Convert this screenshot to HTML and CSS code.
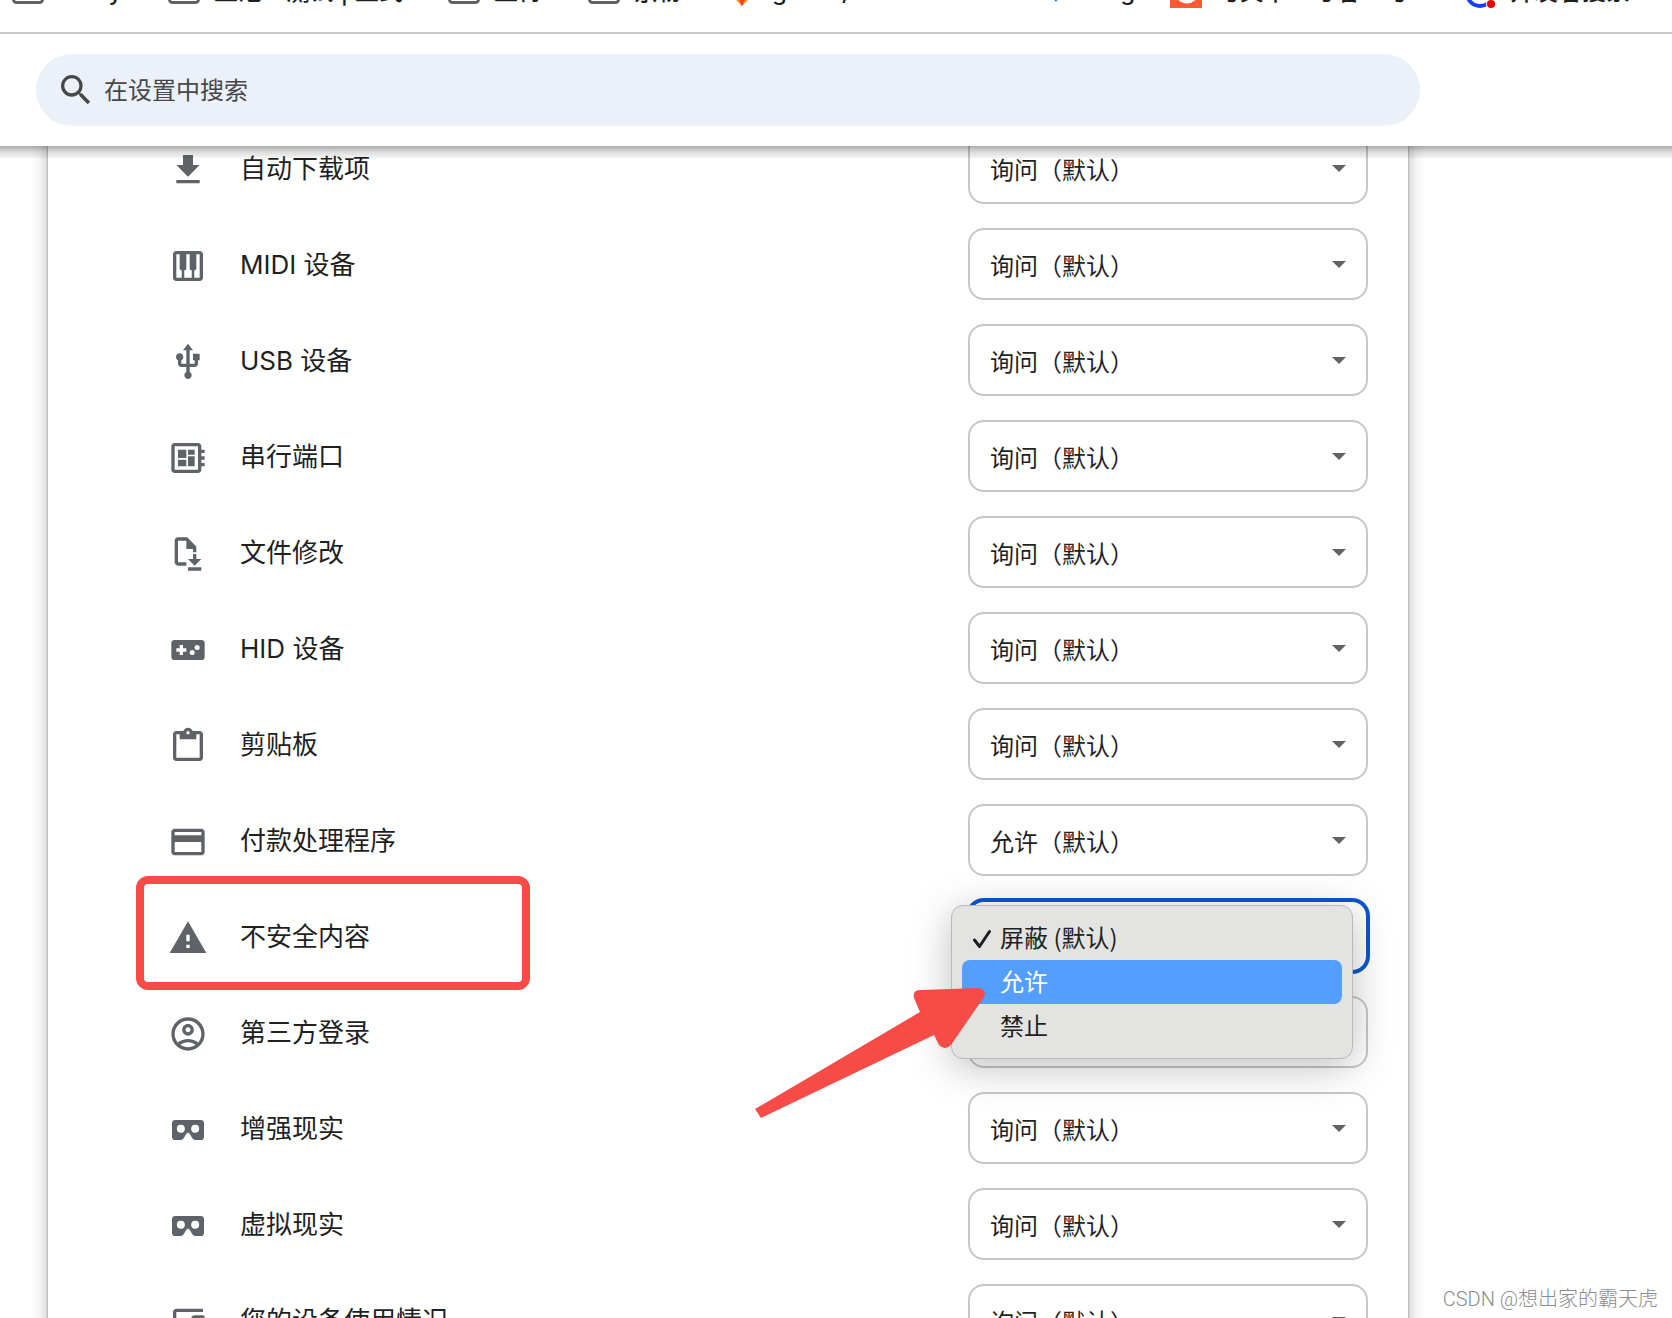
FILE: index.html
```html
<!DOCTYPE html>
<html lang="zh-CN">
<head>
<meta charset="utf-8">
<title>设置 - 网站设置</title>
<link rel="stylesheet" href="styles.css">
</head>
<body>
<nav class="bookmarks" aria-label="书签栏">
  <a href="#"><svg class="bm-icon" viewBox="0 0 32 32"><rect class="folder" x="1.500" y="4" width="29" height="22.500" rx="3"/></svg>study</a>
  <a href="#"><svg class="bm-icon" viewBox="0 0 32 32"><rect class="folder" x="1.500" y="4" width="29" height="22.500" rx="3"/></svg>正池 - 测试 | 正式</a>
  <a href="#"><svg class="bm-icon" viewBox="0 0 32 32"><rect class="folder" x="1.500" y="4" width="29" height="22.500" rx="3"/></svg>正待</a>
  <a href="#"><svg class="bm-icon" viewBox="0 0 32 32"><rect class="folder" x="1.500" y="4" width="29" height="22.500" rx="3"/></svg>京粉</a>
  <a href="#"><svg class="bm-icon" viewBox="0 0 32 32"><path fill="#fc9d26" d="M2 16h28L16 30z"/><path fill="#fc6d26" d="M7 16h18l-9 14z"/><path fill="#e24329" d="M11 16h10l-5 14z"/></svg>gitlab / webserver…</a>
  <a href="#"><svg class="bm-icon" viewBox="0 0 32 32"><path fill="#1a73d8" d="M7 12h20L18 26z"/></svg>Bing</a>
  <a href="#"><svg class="bm-icon" viewBox="0 0 32 32"><path fill="#ff5a36" d="M0 0h32v32H0z"/><path fill="none" stroke="#fff" stroke-width="5" d="M23 9c-6-5-15-1-15 7s9 12 16 6"/></svg>与其卡 - 号者 - 与…</a>
  <a href="#"><svg class="bm-icon" viewBox="0 0 32 32"><circle cx="16" cy="17" r="13" fill="none" stroke="#1440ff" stroke-width="4"/><circle cx="27" cy="28" r="5" fill="#fff"/><circle cx="27" cy="28" r="4" fill="#e60000"/></svg>开发者搜索</a>
</nav>

<header class="toolbar">
  <label class="search">
    <svg viewBox="0 0 24 24" aria-hidden="true"><path d="M15.500 14h-.79l-.28-.27A6.471 6.471 0 0 0 16 9.500 6.500 6.500 0 1 0 9.500 16c1.610 0 3.090-.59 4.230-1.570l.27.28v.79l5 4.990L20.490 19l-4.990-5zm-6 0C7.010 14 5 11.990 5 9.500S7.010 5 9.500 5 14 7.010 14 9.500 11.990 14 9.500 14z"/></svg>
    <input type="text" placeholder="在设置中搜索" aria-label="在设置中搜索">
  </label>
</header>

<main class="content">
  <section class="card">
    <div class="row">
      <svg class="icon" viewBox="0 0 24 24"><path d="M19 9h-4V3H9v6H5l7 7 7-7zM5 18v2h14v-2z"/></svg>
      <label for="s1">自动下载项</label>
      <span class="select"><select id="s1"><option>询问（默认）</option></select></span>
    </div>
    <div class="row">
      <svg class="icon" viewBox="0 0 24 24"><path d="M19 3H5c-1.100 0-2 .9-2 2v14c0 1.100.9 2 2 2h14c1.100 0 2-.9 2-2V5c0-1.100-.9-2-2-2zM14 14.500h.25V19h-4.500v-4.500H10c.55 0 1-.45 1-1V5h2v8.500c0 .55.45 1 1 1zM5 5h2v8.500c0 .55.45 1 1 1h.25V19H5V5zm14 14h-3.250v-4.500H16c.55 0 1-.45 1-1V5h2v14z"/></svg>
      <label for="s2">MIDI 设备</label>
      <span class="select"><select id="s2"><option>询问（默认）</option></select></span>
    </div>
    <div class="row">
      <svg class="icon" viewBox="0 0 24 24"><path d="M15 7v4h1v2h-3V5h2l-3-4-3 4h2v8H8v-2.070c.7-.37 1.200-1.080 1.200-1.930 0-1.210-.99-2.200-2.200-2.200-1.210 0-2.200.99-2.200 2.200 0 .85.5 1.560 1.200 1.930V13c0 1.110.89 2 2 2h3v3.050c-.71.37-1.200 1.100-1.200 1.950 0 1.220.99 2.200 2.200 2.200 1.210 0 2.200-.98 2.200-2.200 0-.85-.49-1.580-1.200-1.950V15h3c1.110 0 2-.89 2-2v-2h1V7h-4z"/></svg>
      <label for="s3">USB 设备</label>
      <span class="select"><select id="s3"><option>询问（默认）</option></select></span>
    </div>
    <div class="row">
      <svg class="icon" viewBox="0 0 24 24"><path fill-rule="evenodd" d="M22 9V7h-2V5c0-1.100-.9-2-2-2H4c-1.100 0-2 .9-2 2v14c0 1.100.9 2 2 2h14c1.100 0 2-.9 2-2v-2h2v-2h-2v-2h2v-2h-2V9h2zm-4 10H4V5h14v14z"/><path d="M6 13h5v4H6zM12 7h4v3h-4zM6 7h5v5H6zM12 11h4v6h-4z"/></svg>
      <label for="s4">串行端口</label>
      <span class="select"><select id="s4"><option>询问（默认）</option></select></span>
    </div>
    <div class="row">
      <svg class="icon" viewBox="0 0 24 24"><path d="M6 2c-1.100 0-2 .9-2 2v13c0 1.100.9 2 2 2h5v-2H6V4h5v5h4v2h2V7.500L11.500 2zM15 12v3h-3l4 4 4-4h-3v-3zM12 20v2h8v-2z"/></svg>
      <label for="s5">文件修改</label>
      <span class="select"><select id="s5"><option>询问（默认）</option></select></span>
    </div>
    <div class="row">
      <svg class="icon" viewBox="0 0 24 24"><rect x="2" y="6" width="20" height="12" rx="2"/><path class="hole" d="M7 9h2v2h2v2H9v2H7v-2H5v-2h2z"/><circle class="hole" cx="14.500" cy="13.500" r="1.500"/><circle class="hole" cx="17.500" cy="10.500" r="1.500"/></svg>
      <label for="s6">HID 设备</label>
      <span class="select"><select id="s6"><option>询问（默认）</option></select></span>
    </div>
    <div class="row">
      <svg class="icon" viewBox="0 0 24 24"><path d="M19 3h-4.180C14.400 1.840 13.300 1 12 1s-2.400.84-2.820 2H5c-1.100 0-2 .9-2 2v14c0 1.100.9 2 2 2h14c1.100 0 2-.9 2-2V5c0-1.100-.9-2-2-2zm-7 0c.55 0 1 .45 1 1s-.45 1-1 1-1-.45-1-1 .45-1 1-1zm7 16H5V5h2v3h10V5h2v14z"/></svg>
      <label for="s7">剪贴板</label>
      <span class="select"><select id="s7"><option>询问（默认）</option></select></span>
    </div>
    <div class="row">
      <svg class="icon" viewBox="0 0 24 24"><path d="M20 4H4c-1.110 0-2 .89-2 2v12c0 1.110.89 2 2 2h16c1.110 0 2-.89 2-2V6c0-1.110-.89-2-2-2zm0 14H4v-6h16v6zm0-10H4V6h16v2z"/></svg>
      <label for="s8">付款处理程序</label>
      <span class="select"><select id="s8"><option>允许（默认）</option></select></span>
    </div>
    <div class="row row-open">
      <svg class="icon" viewBox="0 0 24 24"><path d="M1 21h22L12 2 1 21zm12-3h-2v-2h2v2zm0-4h-2v-4h2v4z"/></svg>
      <label for="s9">不安全内容</label>
      <span class="select"><select id="s9" class="focused"><option></option></select></span>
      <div class="highlight"></div>
      <ul class="menu" role="listbox" aria-label="不安全内容">
        <li role="option" aria-selected="true"><svg class="check" viewBox="0 0 20 20"><path d="M2.500 11l5 6.500L17.500 2.500"/></svg>屏蔽 (默认)</li>
        <li role="option" class="active">允许</li>
        <li role="option">禁止</li>
      </ul>
      <svg class="arrow" viewBox="0 0 230 132" aria-hidden="true"><path d="M0 121L165 24L159 10Q157 2 166 2L224 0Q232 2 229 9L196 57Q190 63 184 57L179 47L6 130Z"/></svg>
    </div>
    <div class="row">
      <svg class="icon" viewBox="0 0 24 24"><path d="M12 2C6.480 2 2 6.480 2 12s4.480 10 10 10 10-4.480 10-10S17.520 2 12 2zM7.350 18.500C8.660 17.560 10.260 17 12 17s3.340.56 4.650 1.500c-1.310.94-2.910 1.500-4.650 1.500s-3.340-.56-4.650-1.500zm10.790-1.380C16.450 15.800 14.320 15 12 15s-4.450.8-6.140 2.120C4.700 15.730 4 13.950 4 12c0-4.420 3.580-8 8-8s8 3.580 8 8c0 1.950-.7 3.730-1.860 5.120zM12 6c-1.930 0-3.500 1.570-3.500 3.500S10.070 13 12 13s3.500-1.570 3.500-3.500S13.930 6 12 6zm0 5c-.83 0-1.500-.67-1.500-1.500S11.170 8 12 8s1.500.67 1.500 1.500S12.830 11 12 11z"/></svg>
      <label for="s10">第三方登录</label>
      <span class="select"><select id="s10"><option></option></select></span>
    </div>
    <div class="row">
      <svg class="icon" viewBox="0 0 24 24"><path d="M4.400 6h15.200a2 2 0 0 1 2 2v8a2 2 0 0 1-2 2h-3.300q-1.300 0-1.800-1.200l-1.400-2.400q-1.100-1.400-2.200 0l-1.400 2.400Q9 18 7.700 18H4.400a2 2 0 0 1-2-2V8a2 2 0 0 1 2-2z"/><circle class="hole" cx="7.700" cy="11.300" r="2.400"/><circle class="hole" cx="16.300" cy="11.300" r="2.400"/></svg>
      <label for="s11">增强现实</label>
      <span class="select"><select id="s11"><option>询问（默认）</option></select></span>
    </div>
    <div class="row">
      <svg class="icon" viewBox="0 0 24 24"><path d="M4.400 6h15.200a2 2 0 0 1 2 2v8a2 2 0 0 1-2 2h-3.300q-1.300 0-1.800-1.200l-1.400-2.400q-1.100-1.400-2.200 0l-1.400 2.400Q9 18 7.700 18H4.400a2 2 0 0 1-2-2V8a2 2 0 0 1 2-2z"/><circle class="hole" cx="7.700" cy="11.300" r="2.400"/><circle class="hole" cx="16.300" cy="11.300" r="2.400"/></svg>
      <label for="s12">虚拟现实</label>
      <span class="select"><select id="s12"><option>询问（默认）</option></select></span>
    </div>
    <div class="row">
      <svg class="icon" viewBox="0 0 24 24"><path d="M21 4H5c-1.100 0-2 .9-2 2v14h10v-2H5V6h16zM16 8h5a1 1 0 0 1 1 1v10a1 1 0 0 1-1 1h-5a2 2 0 0 1-2-2v-8a2 2 0 0 1 2-2z"/></svg>
      <label for="s13">您的设备使用情况</label>
      <span class="select"><select id="s13"><option>询问（默认）</option></select></span>
    </div>
  </section>
  <p class="watermark">CSDN @想出家的霸天虎</p>
</main>
</body>
</html>
```
FILE: styles.css
```css
* {
  box-sizing: border-box;
}

body {
  margin: 0;
  height: 100vh;
  display: flex;
  flex-direction: column;
  overflow: hidden;
  background: #fff;
  color: #1f1f1f;
  font-family: Inter, "Noto Sans CJK SC", sans-serif;
}

/* Bookmark bar, scrolled partly out of view */
.bookmarks {
  flex: none;
  display: grid;
  grid-template-columns: 156px 280px 140px 138px 312px 132px 294px 1fr;
  height: 34px;
  padding-left: 12px;
  border-bottom: 2px solid #c9c9cb;
  overflow: hidden;
}

.bookmarks a {
  display: flex;
  align-items: flex-start;
  gap: 14px;
  height: 36px;
  margin-top: -24px;
  color: #1f1f1f;
  font-size: 24px;
  font-weight: 500;
  line-height: 32px;
  text-decoration: none;
  white-space: nowrap;
}

.bm-icon {
  flex: none;
  width: 32px;
  height: 32px;
}

.folder {
  fill: none;
  stroke: #5f6362;
  stroke-width: 3px;
}

/* Search toolbar */
.toolbar {
  flex: none;
  position: relative;
  z-index: 2;
  padding: 20px 36px;
  background: #fff;
}

.toolbar::after {
  content: "";
  position: absolute;
  top: 100%;
  left: 0;
  right: 0;
  height: 12px;
  background: linear-gradient(rgba(0, 0, 0, .32), rgba(0, 0, 0, .14) 50%, rgba(0, 0, 0, .04));
}

.search {
  display: flex;
  align-items: center;
  gap: 8px;
  max-width: 1384px;
  height: 72px;
  padding: 0 20px;
  border-radius: 36px;
  background: #ecf0f9;
}

.search svg {
  flex: none;
  width: 40px;
  height: 40px;
  fill: #474747;
}

.search input {
  flex: 1;
  padding: 0;
  border: 0;
  outline: 0;
  background: none;
  color: #474747;
  font: inherit;
  font-size: 24px;
}

.search input::placeholder {
  color: #474747;
  opacity: 1;
}

/* Settings list */
.content {
  flex: 1;
  min-height: 0;
  position: relative;
  overflow: hidden;
}

.card {
  max-width: 1360px;
  margin: -26px 48px 0;
  box-shadow: 0 0 2px rgba(0, 0, 0, .4), 0 4px 16px rgba(0, 0, 0, .3);
}

.row {
  position: relative;
  display: flex;
  align-items: center;
  gap: 32px;
  height: 96px;
  padding: 0 40px 0 120px;
}

.row-open {
  z-index: 1;
}

.icon {
  flex: none;
  width: 40px;
  height: 40px;
  margin-top: 4px;
  fill: #5f6368;
}

.hole {
  fill: #fff;
}

.row label {
  flex: 1;
  padding-top: 2px;
  font-size: 26px;
  line-height: 40px;
}

.select {
  position: relative;
  flex: none;
  width: 400px;
}

.select::after {
  content: "";
  position: absolute;
  top: 33px;
  right: 22px;
  border: 7px solid transparent;
  border-top-color: #5f6368;
  border-bottom: 0;
}

select {
  display: block;
  appearance: none;
  width: 100%;
  height: 72px;
  padding: 4px 20px 0;
  border: 2px solid #c7c7c7;
  border-radius: 16px;
  outline: 0;
  background: #fff;
  color: #1f1f1f;
  font: inherit;
  font-size: 24px;
}

.focused {
  border-color: #0b57d0;
  box-shadow: 0 0 0 2px #0b57d0;
}

/* Open drop-down and the marks drawn over it */
.highlight {
  position: absolute;
  top: -12px;
  left: 88px;
  width: 394px;
  height: 114px;
  border: 8px solid #f74b47;
  border-radius: 12px;
}

.menu {
  position: absolute;
  top: 17px;
  right: 55px;
  width: 402px;
  margin: 0;
  padding: 10px;
  border: 1px solid #b9b9b8;
  border-radius: 12px;
  background: #e3e3e1;
  box-shadow: 0 8px 40px rgba(0, 0, 0, .26);
  list-style: none;
}

.menu li {
  position: relative;
  height: 44px;
  padding-left: 38px;
  border-radius: 8px;
  font-family: "Noto Sans CJK SC", sans-serif;
  font-size: 24px;
  line-height: 42px;
}

.menu .active {
  background: #549eff;
  color: #fff;
}

.check {
  position: absolute;
  top: 13px;
  left: 10px;
  width: 20px;
  height: 20px;
  fill: none;
  stroke: #1f1f1f;
  stroke-width: 3px;
  stroke-linecap: round;
  stroke-linejoin: round;
}

.arrow {
  position: absolute;
  top: 100px;
  right: 423px;
  width: 230px;
  height: 132px;
  fill: #f74b47;
}

.watermark {
  position: absolute;
  right: 14px;
  bottom: 4px;
  margin: 0;
  color: #8c8c8c;
  font-family: Roboto, "Noto Sans CJK SC", sans-serif;
  font-size: 20px;
  font-weight: 300;
  line-height: 30px;
}
```
